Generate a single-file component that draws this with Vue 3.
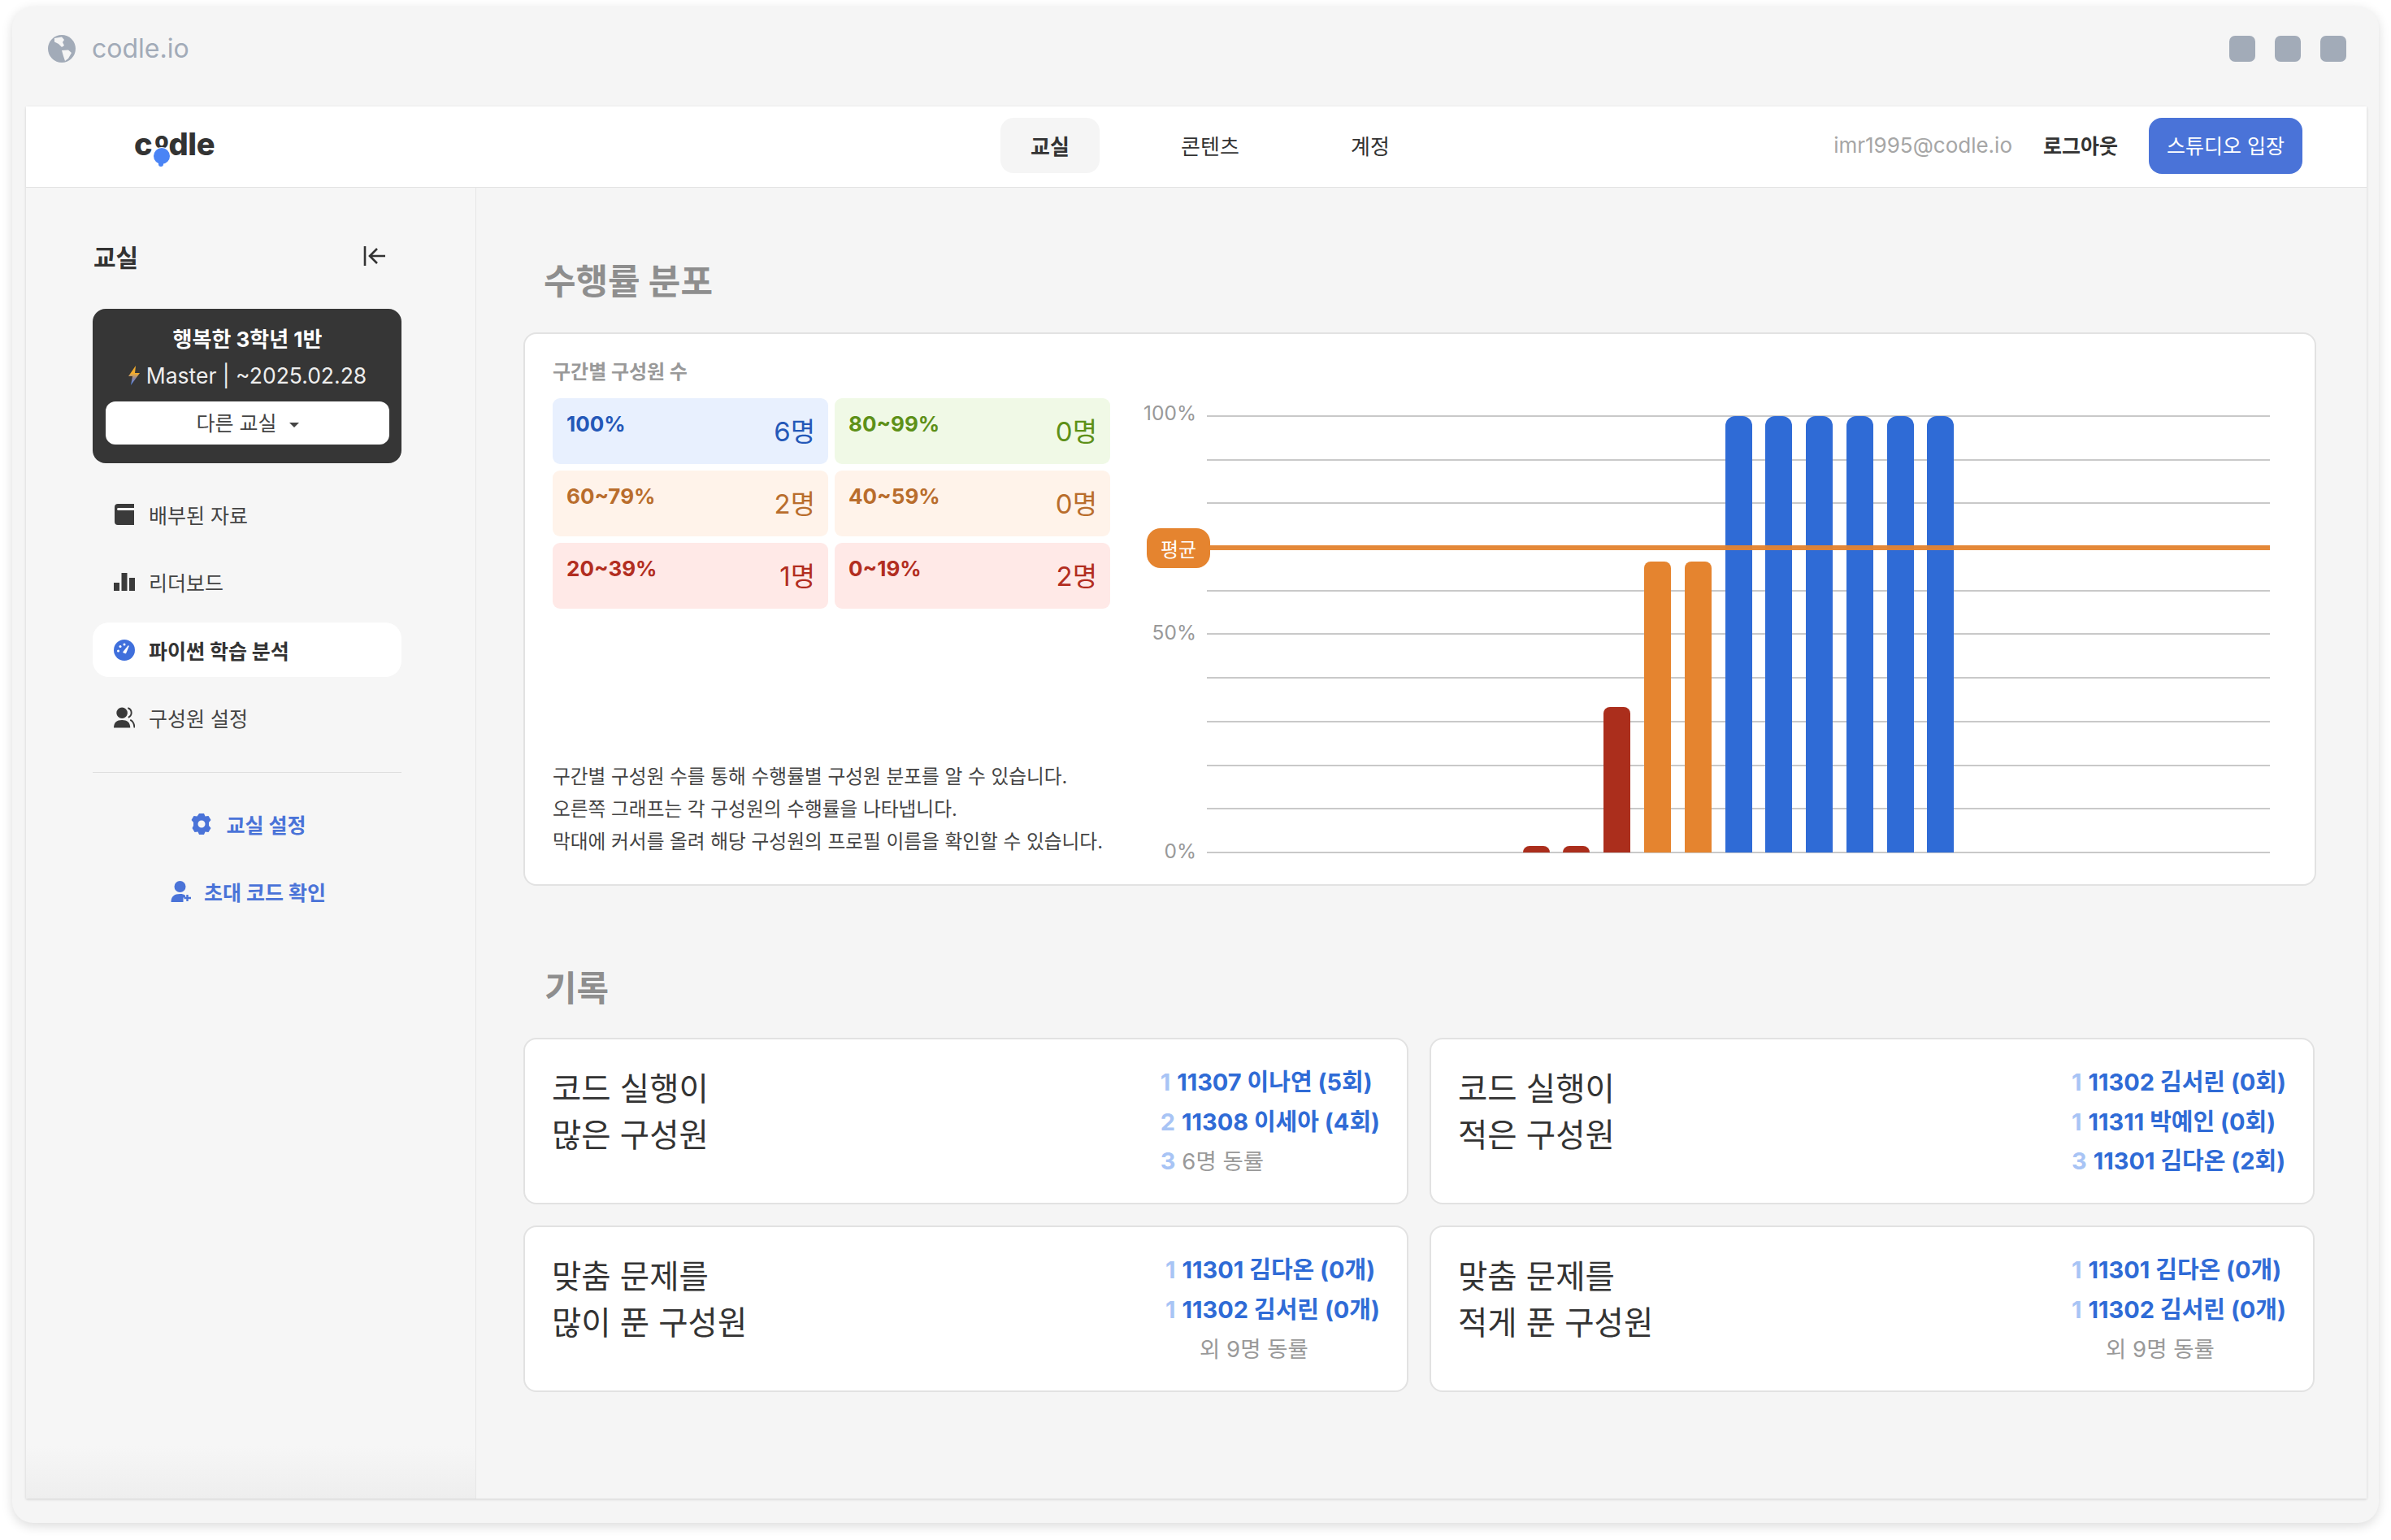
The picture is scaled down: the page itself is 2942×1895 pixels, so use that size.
<template>
  <div class="page">
    <div class="window">
      <!-- 브라우저 상단 바 -->
      <div class="titlebar">
        <svg class="globe" viewBox="0 0 34 34">
          <circle cx="17" cy="17" r="17" fill="#a2abb8" />
          <path d="M8 4l9-1.500 3 3.500-2 3 2 4-3 2-4-4-5-2.500zM17 19l8-.5 4 3.500-4 7-4 3-2-6z" fill="#f5f5f5" />
        </svg>
        <span class="url">codle.io</span>
        <div class="dots">
          <i></i><i></i><i></i>
        </div>
      </div>

      <div class="inner">
        <!-- 헤더 -->
        <header class="header">
          <div class="logo">
            <span class="logo-c">c</span>
            <span class="logo-o">o<i class="bubble"></i></span>
            <span class="logo-rest">dle</span>
          </div>
          <nav class="tabs">
            <a v-for="t in tabs" :key="t" class="tab" :class="{ on: t === '교실' }">{{ t }}</a>
          </nav>
          <div class="account">
            <span class="email">imr1995@codle.io</span>
            <span class="logout">로그아웃</span>
            <button class="studio">스튜디오 입장</button>
          </div>
        </header>

        <div class="body">
          <!-- 사이드바 -->
          <aside class="sidebar">
            <div class="side-head">
              <span>교실</span>
              <svg class="collapse" viewBox="0 0 28 24" fill="none" stroke="#333" stroke-width="2.600">
                <path d="M2 0v24" />
                <path d="M27 12H9M17 3l-9 9 9 9" />
              </svg>
            </div>
            <div class="class-card">
              <div class="class-name">행복한 3학년 1반</div>
              <div class="class-plan">
                <svg viewBox="0 0 14 24" class="bolt">
                  <defs>
                    <linearGradient id="boltfill" x1="0" y1="0" x2="0" y2="1">
                      <stop offset="0.4" stop-color="#f3ac2e" />
                      <stop offset="0.65" stop-color="#8f86a0" />
                      <stop offset="1" stop-color="#4a84f5" />
                    </linearGradient>
                  </defs>
                  <path d="M9 0L0 13h5l-2 11 11-15H8z" fill="url(#boltfill)" />
                </svg>
                Master | ~2025.02.28
              </div>
              <button class="class-switch">다른 교실<i class="caret"></i></button>
            </div>

            <ul class="menu">
              <li class="menu-item">
                <svg viewBox="0 0 24 26" class="ico">
                  <path d="M4 0h20v5H5c-1.500 0-2 .7-2 1.500S3.500 8 5 8h19v18H4c-2.500 0-4-1.500-4-4V4c0-2.500 1.500-4 4-4z" fill="#3a3a3a" />
                  <path d="M5 2.500h19" stroke="#3a3a3a" stroke-width="1" />
                </svg>
                배부된 자료
              </li>
              <li class="menu-item">
                <svg viewBox="0 0 26 22" class="ico">
                  <path d="M0 12h7v10H0zM9.500 0h7v22h-7zM19 6h7v16h-7z" fill="#3a3a3a" />
                </svg>
                리더보드
              </li>
              <li class="menu-item active">
                <svg viewBox="0 0 26 26" class="ico">
                  <circle cx="13" cy="13" r="13" fill="#3f6fdc" />
                  <path d="M12 15.500l6-7.500-3.500 8.500z" fill="#fff" stroke="#fff" stroke-width="1.500" stroke-linejoin="round" />
                  <circle cx="5.500" cy="14" r="1.500" fill="#fff" />
                  <circle cx="8" cy="8.500" r="1.500" fill="#fff" />
                  <circle cx="13" cy="6" r="1.500" fill="#fff" />
                </svg>
                파이썬 학습 분석
              </li>
              <li class="menu-item">
                <svg viewBox="0 0 27 26" class="ico">
                  <circle cx="10.500" cy="7" r="7" fill="#3a3a3a" />
                  <path d="M0 26c0-7 4-10 10.500-10S21 19 21 26z" fill="#3a3a3a" />
                  <path d="M18 .8c3 1 4.500 3.500 4.500 6s-1.500 5-4 6M21 16c3.500 1.500 5.200 5 5.500 10" stroke="#3a3a3a" stroke-width="2" fill="none" />
                </svg>
                구성원 설정
              </li>
            </ul>

            <div class="side-links">
              <a class="side-link">
                <svg viewBox="0 0 26 26" class="ico">
                  <path fill-rule="evenodd" d="M10 0h6l1.500 3.500 4-.5 3 5-2.500 3v4l2.500 3-3 5-4-.5L16 26h-6l-1.500-3.500-4 .5-3-5L3 15v-4L.5 8l3-5 4 .5zM13 8.500a4.500 4.500 0 1 0 0 9 4.500 4.500 0 0 0 0-9z" fill="#4a73d8" />
                </svg>
                교실 설정
              </a>
              <a class="side-link invite">
                <svg viewBox="0 0 25 26" class="ico">
                  <circle cx="11" cy="7" r="7" fill="#4a73d8" />
                  <path d="M0 26c0-7 4-10 11-10 3 0 5 .5 6.500 2v2.500H15V26z" fill="#4a73d8" />
                  <path d="M20 17v8M16 21h8.500" stroke="#4a73d8" stroke-width="2.400" />
                </svg>
                초대 코드 확인
              </a>
            </div>
          </aside>

          <!-- 본문 -->
          <main class="main">
            <h2 class="section-title">수행률 분포</h2>
            <section class="dist-card">
              <div class="dist-left">
                <div class="dist-label">구간별 구성원 수</div>
                <div class="cells">
                  <div v-for="c in cells" :key="c.range" class="cell" :class="c.tone">
                    <span class="cell-range">{{ c.range }}</span>
                    <span class="cell-count">{{ c.count }}명</span>
                  </div>
                </div>
                <p class="dist-desc">
                  구간별 구성원 수를 통해 수행률별 구성원 분포를 알 수 있습니다.<br />
                  오른쪽 그래프는 각 구성원의 수행률을 나타냅니다.<br />
                  막대에 커서를 올려 해당 구성원의 프로필 이름을 확인할 수 있습니다.
                </p>
              </div>

              <div class="chart">
                <div class="y-axis">
                  <span>100%</span>
                  <span>50%</span>
                  <span>0%</span>
                </div>
                <div class="plot">
                  <div class="grid">
                    <i v-for="n in 11" :key="n"></i>
                  </div>
                  <div class="bars">
                    <div
                      v-for="(b, i) in bars"
                      :key="i"
                      class="bar"
                      :class="barTone(b)"
                      :style="{ height: `${b * 5.37}px` }"
                    ></div>
                  </div>
                  <div class="avg-line"></div>
                  <div class="avg-badge">평균</div>
                </div>
              </div>
            </section>

            <h2 class="section-title second">기록</h2>
            <section class="records">
              <div v-for="r in records" :key="r.title[1]" class="record">
                <div class="record-title">
                  <div>{{ r.title[0] }}</div>
                  <div>{{ r.title[1] }}</div>
                </div>
                <ul class="ranks">
                  <li v-for="(row, i) in r.rows" :key="i" :class="{ muted: row.muted, indent: !row.rank }">
                    <span v-if="row.rank" class="rank">{{ row.rank }}</span>{{ row.text }}
                  </li>
                </ul>
              </div>
            </section>
          </main>
        </div>
      </div>
    </div>
  </div>
</template>

<script setup>
const tabs = ['교실', '콘텐츠', '계정'];

const cells = [
  { range: '100%', count: 6, tone: 'blue' },
  { range: '80~99%', count: 0, tone: 'green' },
  { range: '60~79%', count: 2, tone: 'orange' },
  { range: '40~59%', count: 0, tone: 'orange' },
  { range: '20~39%', count: 1, tone: 'red' },
  { range: '0~19%', count: 2, tone: 'red' },
];

// 구성원별 수행률
const bars = [1.5, 1.5, 33.3, 66.7, 66.7, 100, 100, 100, 100, 100, 100];

const barTone = (v) => {
  if (v >= 100) return 'blue';
  if (v >= 40) return 'orange';
  return 'red';
};

const records = [
  {
    title: ['코드 실행이', '많은 구성원'],
    rows: [
      { rank: 1, text: '11307 이나연 (5회)' },
      { rank: 2, text: '11308 이세아 (4회)' },
      { rank: 3, text: '6명 동률', muted: true },
    ],
  },
  {
    title: ['코드 실행이', '적은 구성원'],
    rows: [
      { rank: 1, text: '11302 김서린 (0회)' },
      { rank: 1, text: '11311 박예인 (0회)' },
      { rank: 3, text: '11301 김다온 (2회)' },
    ],
  },
  {
    title: ['맞춤 문제를', '많이 푼 구성원'],
    rows: [
      { rank: 1, text: '11301 김다온 (0개)' },
      { rank: 1, text: '11302 김서린 (0개)' },
      { text: '외 9명 동률', muted: true },
    ],
  },
  {
    title: ['맞춤 문제를', '적게 푼 구성원'],
    rows: [
      { rank: 1, text: '11301 김다온 (0개)' },
      { rank: 1, text: '11302 김서린 (0개)' },
      { text: '외 9명 동률', muted: true },
    ],
  },
];
</script>

<style>
html,
body {
  margin: 0;
  background: #fff;
}
</style>

<style scoped>
.page {
  width: 2942px;
  height: 1895px;
  padding: 8px 15px 21px;
  box-sizing: border-box;
  font-family: Inter, 'Noto Sans CJK KR', sans-serif;
  color: #333;
  overflow: hidden;
}

.window {
  height: 100%;
  background: #f5f5f5;
  border-radius: 26px;
  box-shadow: 0 4px 14px rgba(0, 0, 0, 0.14);
  display: flex;
  flex-direction: column;
}

.titlebar {
  height: 123px;
  flex: none;
  display: flex;
  align-items: flex-start;
  padding: 35px 40px 0 44px;
  box-sizing: border-box;
}

.globe {
  width: 34px;
  height: 34px;
}

.url {
  margin-left: 20px;
  font-size: 32px;
  line-height: 34px;
  color: #a2abb8;
}

.dots {
  margin-left: auto;
  margin-top: 1px;
  display: flex;
  gap: 24px;
}

.dots i {
  width: 32px;
  height: 32px;
  border-radius: 7px;
  background: #a2abb8;
}

.inner {
  flex: 1;
  min-height: 0;
  margin: 0 15px 30px 17px;
  display: flex;
  flex-direction: column;
  box-shadow: 0 1px 3px rgba(0, 0, 0, 0.16);
}

.header {
  height: 100px;
  flex: none;
  padding-bottom: 3px;
  position: relative;
  display: flex;
  align-items: center;
  justify-content: space-between;
  background: #fff;
  border-bottom: 1px solid #e3e3e3;
  box-sizing: border-box;
}

.logo {
  margin-left: 133px;
  margin-bottom: 5px;
  display: flex;
  align-items: baseline;
  font-size: 38px;
  font-weight: 800;
  letter-spacing: -0.3px;
  color: #333;
  line-height: 1;
}

.logo-o {
  position: relative;
  margin-left: 3px;
  font-size: 28px;
  transform: translateY(-8px);
}

.bubble {
  position: absolute;
  left: -1px;
  top: 23px;
  width: 20px;
  height: 20px;
  border-radius: 50%;
  background: #4a84f5;
  box-shadow: 0 0 0 1px #fff;
}

.bubble::after {
  content: '';
  position: absolute;
  left: 6px;
  bottom: -3px;
  width: 6px;
  height: 6px;
  background: #4a84f5;
  border-radius: 0 0 50% 50%;
}

.tabs {
  position: absolute;
  left: 1199px;
  display: flex;
  gap: 75px;
}

.tab {
  width: 122px;
  height: 68px;
  padding-bottom: 2px;
  box-sizing: border-box;
  border-radius: 16px;
  display: flex;
  align-items: center;
  justify-content: center;
  font-size: 26px;
  color: #333;
}

.tab.on {
  background: #f5f5f5;
  font-weight: 700;
}

.account {
  display: flex;
  align-items: center;
  margin-right: 79px;
}

.email {
  margin-bottom: 2px;
  font-size: 26px;
  color: #a6a6a6;
}

.logout {
  margin-left: 38px;
  margin-bottom: 2px;
  font-size: 25px;
  font-weight: 700;
  color: #333;
}

.studio {
  margin-left: 38px;
  width: 189px;
  height: 69px;
  padding-bottom: 3px;
  border: 0;
  border-radius: 16px;
  background: #4a73d8;
  color: #fff;
  font: inherit;
  font-size: 25px;
}

.body {
  flex: 1;
  min-height: 0;
  display: flex;
}

.sidebar {
  width: 554px;
  flex: none;
  padding: 0 91px 0 82px;
  box-sizing: border-box;
  border-right: 1px solid #e6e6e6;
  background: linear-gradient(#f6f6f6 96%, #eeeeee);
}

.side-head {
  height: 149px;
  display: flex;
  align-items: center;
  justify-content: space-between;
  padding: 19px 19px 0 1px;
  box-sizing: border-box;
  font-size: 30px;
  font-weight: 700;
  color: #333;
}

.collapse {
  width: 28px;
  height: 24px;
}

.class-card {
  height: 190px;
  box-sizing: border-box;
  padding: 19px 15px 0 16px;
  border-radius: 16px;
  background: #363636;
  color: #fff;
  text-align: center;
}

.class-name {
  font-size: 26px;
  font-weight: 700;
  line-height: 38px;
}

.class-plan {
  margin-top: 6px;
  font-size: 26.500px;
  line-height: 38px;
  color: #eee;
  display: flex;
  align-items: center;
  justify-content: center;
  gap: 8px;
}

.bolt {
  width: 14px;
  height: 24px;
}

.class-switch {
  margin-top: 13px;
  width: 100%;
  height: 53px;
  padding-bottom: 5px;
  border: 0;
  border-radius: 12px;
  background: #fff;
  color: #444;
  font: inherit;
  font-size: 25px;
}

.caret {
  display: inline-block;
  margin-left: 15px;
  vertical-align: middle;
  border: 6px solid transparent;
  border-top-color: #444;
  border-bottom-width: 0;
}

.menu {
  list-style: none;
  margin: 29px 0 0;
  padding: 0 0 33px;
  display: flex;
  flex-direction: column;
  gap: 16.500px;
  border-bottom: 1px solid #dfdfdf;
}

.menu-item {
  height: 67px;
  padding-left: 26px;
  display: flex;
  align-items: center;
  gap: 17px;
  font-size: 25px;
  color: #444;
  border-radius: 20px;
}

.menu-item.active {
  background: #fff;
  font-weight: 700;
  color: #333;
}

.ico {
  width: 26px;
  height: 26px;
  flex: none;
}

.side-links {
  margin-top: 47px;
  padding-left: 3px;
  display: flex;
  flex-direction: column;
  gap: 50px;
  align-items: center;
}

.side-link {
  height: 33px;
  display: flex;
  align-items: center;
  gap: 18px;
  font-size: 25px;
  font-weight: 700;
  color: #4a73d8;
}

.side-link.invite {
  gap: 15px;
}

.main {
  flex: 1;
  min-width: 0;
  padding: 85px 62px 0 58px;
  background: #f5f5f5;
}

.section-title {
  margin: 0 0 33px;
  padding-left: 25px;
  font-size: 43px;
  line-height: 60px;
  font-weight: 700;
  color: #8e8e8e;
}

.section-title.second {
  margin: 96px 0 31px;
  padding-left: 26px;
}

.dist-card {
  height: 681px;
  box-sizing: border-box;
  padding: 31px 0 32px 34px;
  display: flex;
  background: #fff;
  border: 2px solid #e2e2e2;
  border-radius: 16px;
}

.dist-left {
  width: 686px;
  flex: none;
  display: flex;
  flex-direction: column;
}

.dist-label {
  font-size: 24px;
  line-height: 32px;
  font-weight: 700;
  color: #999;
}

.cells {
  margin-top: 16px;
  display: grid;
  grid-template-columns: repeat(2, 339px);
  gap: 8px;
}

.cell {
  height: 81px;
  box-sizing: border-box;
  padding: 0 16px 3px 17px;
  border-radius: 9px;
  display: flex;
  align-items: center;
  justify-content: space-between;
}

.cell-range {
  align-self: flex-start;
  margin-top: 16px;
  font-size: 26px;
  line-height: 32px;
  font-weight: 700;
}

.cell-count {
  font-size: 33px;
}

.cell.blue {
  background: #e8f0fe;
  color: #2458b8;
}

.cell.green {
  background: #f0f9e6;
  color: #5d9018;
}

.cell.orange {
  background: #fff3ea;
  color: #b96d2c;
}

.cell.red {
  background: #ffe9e7;
  color: #b22d20;
}

.dist-desc {
  margin: auto 0 0;
  font-size: 23.700px;
  line-height: 40px;
  color: #444;
  white-space: nowrap;
}

.chart {
  margin: 69px 0 0 45px;
  display: flex;
  align-self: flex-start;
}

.y-axis {
  width: 61px;
  height: 569px;
  margin-top: -18px;
  margin-right: 13px;
  display: flex;
  flex-direction: column;
  justify-content: space-between;
  align-items: flex-end;
  font-size: 24.500px;
  line-height: 30px;
  color: #999;
}

.plot {
  position: relative;
  width: 1308px;
  height: 539px;
}

.grid {
  position: absolute;
  inset: 0;
  display: flex;
  flex-direction: column;
  justify-content: space-between;
}

.grid i {
  display: block;
  height: 2px;
  background: #c9c9c9;
}

.bars {
  position: absolute;
  inset: 0 0 1px;
  display: flex;
  align-items: flex-end;
  justify-content: center;
  gap: 16.800px;
}

.bar {
  width: 33px;
  border-radius: 8px 8px 0 0;
}

.bar.blue {
  background: #2f6bd6;
  border-radius: 12px 12px 0 0;
}

.bar.orange {
  background: #e5842f;
}

.bar.red {
  background: #ab2e1c;
}

.avg-line {
  position: absolute;
  left: 0;
  right: 0;
  top: 160px;
  height: 6px;
  background: #e5842f;
  opacity: 0.95;
}

.avg-badge {
  position: absolute;
  left: -74px;
  top: 139px;
  width: 78px;
  height: 49px;
  border-radius: 17px;
  background: #e5842f;
  color: #fff;
  font-size: 24px;
  display: flex;
  align-items: center;
  justify-content: center;
}

.records {
  display: grid;
  grid-template-columns: 1089px 1089px;
  gap: 26px 26px;
}

.record {
  height: 205px;
  box-sizing: border-box;
  padding: 33px 33px 0 33px;
  display: flex;
  justify-content: space-between;
  background: #fff;
  border: 2px solid #e2e2e2;
  border-radius: 16px;
}

.record-title {
  font-size: 39.500px;
  line-height: 57px;
  color: #333;
}

.ranks {
  list-style: none;
  margin: -4px 0 0;
  padding: 0;
  font-size: 29px;
  line-height: 48.500px;
  font-weight: 700;
  color: #2f6bd6;
  white-space: nowrap;
}

.rank {
  margin-right: 8px;
  color: #a8c4f5;
}

.ranks .muted {
  font-size: 27.500px;
  font-weight: 400;
  color: #999;
}

.ranks .muted .rank {
  font-size: 29px;
  font-weight: 700;
}

.ranks .indent {
  padding-left: 42px;
}
</style>
